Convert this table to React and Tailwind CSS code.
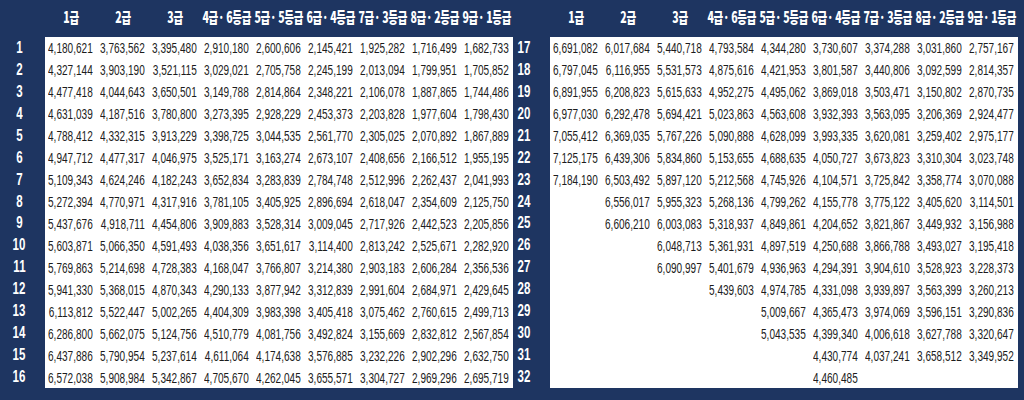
import React from "react";

const HEADERS = ["1급", "2급", "3급", "4급· 6등급", "5급· 5등급", "6급· 4등급", "7급· 3등급", "8급· 2등급", "9급· 1등급"];

const LEFT = [
  ["4,180,621","3,763,562","3,395,480","2,910,180","2,600,606","2,145,421","1,925,282","1,716,499","1,682,733"],
  ["4,327,144","3,903,190","3,521,115","3,029,021","2,705,758","2,245,199","2,013,094","1,799,951","1,705,852"],
  ["4,477,418","4,044,643","3,650,501","3,149,788","2,814,864","2,348,221","2,106,078","1,887,865","1,744,486"],
  ["4,631,039","4,187,516","3,780,800","3,273,395","2,928,229","2,453,373","2,203,828","1,977,604","1,798,430"],
  ["4,788,412","4,332,315","3,913,229","3,398,725","3,044,535","2,561,770","2,305,025","2,070,892","1,867,889"],
  ["4,947,712","4,477,317","4,046,975","3,525,171","3,163,274","2,673,107","2,408,656","2,166,512","1,955,195"],
  ["5,109,343","4,624,246","4,182,243","3,652,834","3,283,839","2,784,748","2,512,996","2,262,437","2,041,993"],
  ["5,272,394","4,770,971","4,317,916","3,781,105","3,405,925","2,896,694","2,618,047","2,354,609","2,125,750"],
  ["5,437,676","4,918,711","4,454,806","3,909,883","3,528,314","3,009,045","2,717,926","2,442,523","2,205,856"],
  ["5,603,871","5,066,350","4,591,493","4,038,356","3,651,617","3,114,400","2,813,242","2,525,671","2,282,920"],
  ["5,769,863","5,214,698","4,728,383","4,168,047","3,766,807","3,214,380","2,903,183","2,606,284","2,356,536"],
  ["5,941,330","5,368,015","4,870,343","4,290,133","3,877,942","3,312,839","2,991,604","2,684,971","2,429,645"],
  ["6,113,812","5,522,447","5,002,265","4,404,309","3,983,398","3,405,418","3,075,462","2,760,615","2,499,713"],
  ["6,286,800","5,662,075","5,124,756","4,510,779","4,081,756","3,492,824","3,155,669","2,832,812","2,567,854"],
  ["6,437,886","5,790,954","5,237,614","4,611,064","4,174,638","3,576,885","3,232,226","2,902,296","2,632,750"],
  ["6,572,038","5,908,984","5,342,867","4,705,670","4,262,045","3,655,571","3,304,727","2,969,296","2,695,719"],
];

const RIGHT = [
  ["6,691,082","6,017,684","5,440,718","4,793,584","4,344,280","3,730,607","3,374,288","3,031,860","2,757,167"],
  ["6,797,045","6,116,955","5,531,573","4,875,616","4,421,953","3,801,587","3,440,806","3,092,599","2,814,357"],
  ["6,891,955","6,208,823","5,615,633","4,952,275","4,495,062","3,869,018","3,503,471","3,150,802","2,870,735"],
  ["6,977,030","6,292,478","5,694,421","5,023,863","4,563,608","3,932,393","3,563,095","3,206,369","2,924,477"],
  ["7,055,412","6,369,035","5,767,226","5,090,888","4,628,099","3,993,335","3,620,081","3,259,402","2,975,177"],
  ["7,125,175","6,439,306","5,834,860","5,153,655","4,688,635","4,050,727","3,673,823","3,310,304","3,023,748"],
  ["7,184,190","6,503,492","5,897,120","5,212,568","4,745,926","4,104,571","3,725,842","3,358,774","3,070,088"],
  ["","6,556,017","5,955,323","5,268,136","4,799,262","4,155,778","3,775,122","3,405,620","3,114,501"],
  ["","6,606,210","6,003,083","5,318,937","4,849,861","4,204,652","3,821,867","3,449,932","3,156,988"],
  ["","","6,048,713","5,361,931","4,897,519","4,250,688","3,866,788","3,493,027","3,195,418"],
  ["","","6,090,997","5,401,679","4,936,963","4,294,391","3,904,610","3,528,923","3,228,373"],
  ["","","","5,439,603","4,974,785","4,331,098","3,939,897","3,563,399","3,260,213"],
  ["","","","","5,009,667","4,365,473","3,974,069","3,596,151","3,290,836"],
  ["","","","","5,043,535","4,399,340","4,006,618","3,627,788","3,320,647"],
  ["","","","","","4,430,774","4,037,241","3,658,512","3,349,952"],
  ["","","","","","4,460,485","","",""],
];

function Table({ rows, start, numW, numInner }) {
  return (
    <div className="flex flex-col">
      <div className="flex h-[37px]">
        <div className={numW} />
        {HEADERS.map((h) => (
          <div key={h} className="w-[52px] flex justify-center pt-[8px]">
            <span
              className="inline-block whitespace-nowrap text-white font-black text-[15px] leading-[18px] scale-x-[0.7] origin-center tracking-[-0.4px]"
              style={{ fontFamily: '"Noto Sans CJK KR", "Liberation Sans", sans-serif' }}
            >
              {h}
            </span>
          </div>
        ))}
      </div>
      <div className="flex">
        <div className={`${numW} flex flex-col`}>
          {rows.map((_, i) => (
            <div key={i} className={`h-[21.94px] ${numInner} flex items-center justify-center`}>
              <span
                className="inline-block text-white font-bold text-[16px] leading-none scale-x-[0.72]"
                style={{ fontFamily: '"Liberation Sans", Arial, sans-serif' }}
              >
                {start + i}
              </span>
            </div>
          ))}
        </div>
        <div className="bg-white grid grid-cols-[repeat(9,52px)]">
          {rows.map((r, i) =>
            r.map((v, j) => (
              <div key={`${i}-${j}`} className="h-[21.94px] flex items-center justify-center pr-[1px]">
                <span
                  className="inline-block whitespace-nowrap text-[#1c1c1c] text-[15px] leading-none scale-x-[0.67]"
                  style={{ fontFamily: '"Liberation Sans", Arial, sans-serif' }}
                >
                  {v}
                </span>
              </div>
            ))
          )}
        </div>
      </div>
    </div>
  );
}

export default function App() {
  return (
    <div className="w-[1024px] h-[400px] bg-[#1e3561] flex overflow-hidden">
      <Table rows={LEFT} start={1} numW="w-[45px]" numInner="w-[38px]" />
      <Table rows={RIGHT} start={17} numW="w-[37px]" numInner="w-[22px]" />
    </div>
  );
}
